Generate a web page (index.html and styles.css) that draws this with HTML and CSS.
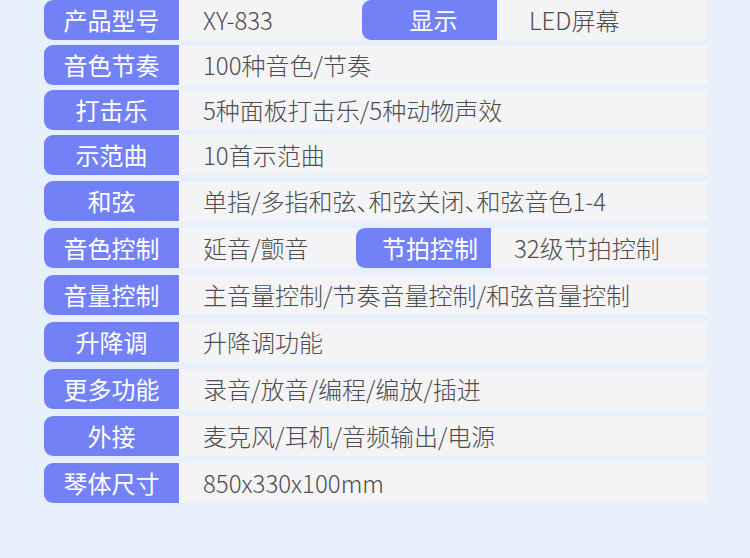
FILE: index.html
```html
<!DOCTYPE html>
<html lang="zh-CN">
<head>
<meta charset="utf-8">
<title>产品参数</title>
<link rel="stylesheet" href="styles.css">
</head>
<body>
<div class="spec">
  <div class="row">
    <div class="label">产品型号</div>
    <div class="value value--w183">XY-833</div>
    <div class="label label--shift4">显示</div>
    <div class="value value--pad32">LED屏幕</div>
  </div>
  <div class="row">
    <div class="label">音色节奏</div>
    <div class="value">100种音色/节奏</div>
  </div>
  <div class="row">
    <div class="label">打击乐</div>
    <div class="value">5种面板打击乐/5种动物声效</div>
  </div>
  <div class="row">
    <div class="label">示范曲</div>
    <div class="value">10首示范曲</div>
  </div>
  <div class="row row--gap6">
    <div class="label">和弦</div>
    <div class="value value--halt">单指/多指和弦、和弦关闭、和弦音色1-4</div>
  </div>
  <div class="row row--gap7">
    <div class="label">音色控制</div>
    <div class="value value--w177">延音/颤音</div>
    <div class="label label--shift12">节拍控制</div>
    <div class="value value--pad23">32级节拍控制</div>
  </div>
  <div class="row row--gap7">
    <div class="label">音量控制</div>
    <div class="value">主音量控制/节奏音量控制/和弦音量控制</div>
  </div>
  <div class="row row--gap7">
    <div class="label">升降调</div>
    <div class="value">升降调功能</div>
  </div>
  <div class="row row--gap7">
    <div class="label">更多功能</div>
    <div class="value">录音/放音/编程/编放/插进</div>
  </div>
  <div class="row row--gap7">
    <div class="label">外接</div>
    <div class="value">麦克风/耳机/音频输出/电源</div>
  </div>
  <div class="row row--gap7">
    <div class="label">琴体尺寸</div>
    <div class="value">850x330x100mm</div>
  </div>
</div>
</body>
</html>
```

FILE: styles.css
```css
html, body {
  margin: 0;
  padding: 0;
  background: #e8f0fc;
}
body {
  width: 750px;
  height: 558px;
  overflow: hidden;
  font-family: "Noto Sans CJK SC", "Noto Sans", sans-serif;
}
.spec {
  display: flex;
  flex-direction: column;
  gap: 5px;
  padding-left: 44px;
  width: 663px;
}
.row {
  display: flex;
  height: 40px;
}
.row--gap6 { margin-top: 1px; }
.row--gap7 { margin-top: 2.05px; }
.label {
  flex: 0 0 135px;
  background: #7381f7;
  color: #ffffff;
  font-size: 24px;
  line-height: 40px;
  text-align: center;
  border-radius: 9px 0 0 9px;
  box-sizing: border-box;
  font-weight: 400;
}
.label--shift4 { padding-left: 8px; }
.label--shift12 { padding-left: 13px; }
.value {
  flex: 1 1 auto;
  background: #f4f4f6;
  color: #4d4d4d;
  font-size: 24px;
  line-height: 40px;
  padding-left: 24px;
  white-space: nowrap;
  font-weight: 300;
}
.value--halt {
  font-feature-settings: "halt" 1;
}
.value--w183 { flex: 0 0 183px; box-sizing: border-box; }
.value--w177 { flex: 0 0 177px; box-sizing: border-box; }
.value--pad32 { padding-left: 32px; }
.value--pad23 { padding-left: 23px; }
```
